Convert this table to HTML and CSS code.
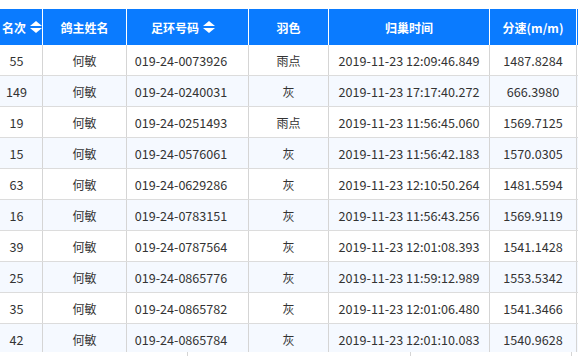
FILE: index.html
```html
<!DOCTYPE html>
<html>
<head>
<meta charset="utf-8">
<link rel="stylesheet" href="styles.css">
</head>
<body>
<div class="wrap">
  <div class="row head">
    <div class="c c1 sortable">名次<span class="sort"><i class="up"></i><i class="down"></i></span></div>
    <div class="c">鸽主姓名</div>
    <div class="c c3h sortable">足环号码<span class="sort"><i class="up"></i><i class="down"></i></span></div>
    <div class="c">羽色</div>
    <div class="c">归巢时间</div>
    <div class="c">分速(m/m)</div>
    <div class="c"></div>
  </div>
  <div class="row"><div class="c c1 n">55</div><div class="c">何敏</div><div class="c c3 n">019-24-0073926</div><div class="c">雨点</div><div class="c n">2019-11-23 12:09:46.849</div><div class="c n">1487.8284</div><div class="c"></div></div>
  <div class="row alt"><div class="c c1 n">149</div><div class="c">何敏</div><div class="c c3 n">019-24-0240031</div><div class="c">灰</div><div class="c n">2019-11-23 17:17:40.272</div><div class="c n">666.3980</div><div class="c"></div></div>
  <div class="row"><div class="c c1 n">19</div><div class="c">何敏</div><div class="c c3 n">019-24-0251493</div><div class="c">雨点</div><div class="c n">2019-11-23 11:56:45.060</div><div class="c n">1569.7125</div><div class="c"></div></div>
  <div class="row alt"><div class="c c1 n">15</div><div class="c">何敏</div><div class="c c3 n">019-24-0576061</div><div class="c">灰</div><div class="c n">2019-11-23 11:56:42.183</div><div class="c n">1570.0305</div><div class="c"></div></div>
  <div class="row"><div class="c c1 n">63</div><div class="c">何敏</div><div class="c c3 n">019-24-0629286</div><div class="c">灰</div><div class="c n">2019-11-23 12:10:50.264</div><div class="c n">1481.5594</div><div class="c"></div></div>
  <div class="row alt"><div class="c c1 n">16</div><div class="c">何敏</div><div class="c c3 n">019-24-0783151</div><div class="c">灰</div><div class="c n">2019-11-23 11:56:43.256</div><div class="c n">1569.9119</div><div class="c"></div></div>
  <div class="row"><div class="c c1 n">39</div><div class="c">何敏</div><div class="c c3 n">019-24-0787564</div><div class="c">灰</div><div class="c n">2019-11-23 12:01:08.393</div><div class="c n">1541.1428</div><div class="c"></div></div>
  <div class="row alt"><div class="c c1 n">25</div><div class="c">何敏</div><div class="c c3 n">019-24-0865776</div><div class="c">灰</div><div class="c n">2019-11-23 11:59:12.989</div><div class="c n">1553.5342</div><div class="c"></div></div>
  <div class="row"><div class="c c1 n">35</div><div class="c">何敏</div><div class="c c3 n">019-24-0865782</div><div class="c">灰</div><div class="c n">2019-11-23 12:01:06.480</div><div class="c n">1541.3466</div><div class="c"></div></div>
  <div class="row alt last"><div class="c c1 n">42</div><div class="c">何敏</div><div class="c c3 n">019-24-0865784</div><div class="c">灰</div><div class="c n">2019-11-23 12:01:10.083</div><div class="c n">1540.9628</div><div class="c"></div></div>
</div>
<div class="foot">
  <div class="f f1"></div><div class="f f2"></div><div class="f f3"></div>
</div>
</body>
</html>
```
FILE: styles.css
```css
html, body {
  margin: 0;
  padding: 0;
  background: #fff;
  overflow: hidden;
}
body {
  padding-top: 9px;
  font-family: "Noto Sans CJK SC", "Noto Sans", sans-serif;
  font-size: 12px;
  color: #333;
}
.wrap {
  width: 578px;
  height: 343px;
  overflow: hidden;
}
.row {
  display: grid;
  grid-template-columns: 43px 84px 122px 80px 161px 87px 123px;
  width: 700px;
  height: 31px;
  box-sizing: border-box;
  border-bottom: 1px solid #dcdcdc;
  background: #fff;
}
.row.alt { background: #f5f9ff; }
.row.last { border-bottom: none; height: 30px; }
.c {
  box-sizing: border-box;
  border-right: 1px solid #d5d5d5;
  display: flex;
  align-items: center;
  justify-content: center;
  white-space: nowrap;
}
.n { font-size: 12.6px; }
.c1 { padding-right: 9px; }
.c3 { padding-right: 13px; }
.head {
  height: 36px;
  border-bottom: none;
  background: #0a7bff;
  color: #fff;
  font-weight: bold;
}
.head .c { border-right-color: #fff; }
.head .c1 { padding-right: 0; padding-left: 2px; justify-content: flex-start; }
.head .c3h { padding-right: 9px; }
.sort {
  display: inline-flex;
  flex-direction: column;
  align-items: center;
  margin-left: 4px;
  gap: 2px;
}
.sort i {
  display: block;
  width: 0;
  height: 0;
  border-left: 6px solid transparent;
  border-right: 6px solid transparent;
}
.sort .up { border-bottom: 5px solid #fff; }
.sort .down { border-top: 5px solid #fff; }
.foot {
  display: flex;
  height: 4px;
}
.f { border-right: 1px solid #d5d5d5; height: 4px; }
.f1 { width: 187px; }
.f2 { width: 222px; }
.f3 { width: 160px; }
```
